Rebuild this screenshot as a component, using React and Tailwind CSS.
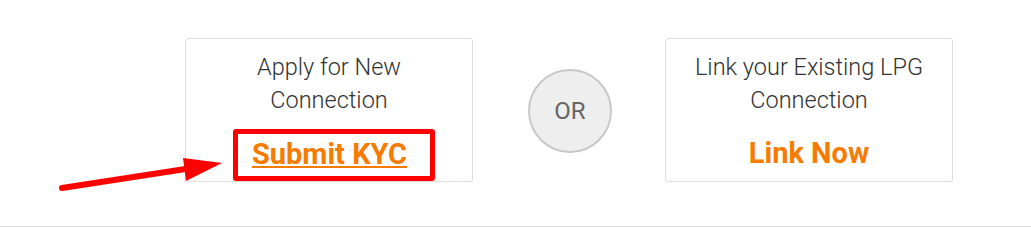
export default function App() {
  return (
    <div className="relative h-[227px] w-full bg-white border-b border-[#dcdcdc] font-['Roboto',sans-serif]">
      <div className="flex items-start pl-[185px] pt-[38px]">
        <div className="w-[288px] h-[144px] border border-[#dddddd] rounded-[3px] flex flex-col items-center pt-[12px]">
          <p className="text-[23.5px] leading-[33px] font-light text-[#333333] text-center">
            Apply for New
            <br />
            Connection
          </p>
          <div className="mt-[12px] ml-[10px] w-[202px] h-[55px] border-[5px] border-[#ff0000] rounded-[3px] flex items-center justify-center">
            <a href="#" className="text-[29px] font-bold text-[#f77b00] underline decoration-2 underline-offset-2 leading-none -mt-[2px] -ml-[9px]">
              Submit KYC
            </a>
          </div>
        </div>

        <div className="ml-[55px] mt-[31px] w-[84px] h-[84px] rounded-full border-2 border-[#c8c8c8] bg-[#eeeeee] flex items-center justify-center">
          <span className="text-[24px] text-[#666666]">OR</span>
        </div>

        <div className="ml-[53px] w-[288px] h-[144px] border border-[#dddddd] rounded-[3px] flex flex-col items-center pt-[12px]">
          <p className="text-[23.5px] leading-[33px] font-light text-[#333333] text-center">
            Link your Existing LPG
            <br />
            Connection
          </p>
          <a href="#" className="mt-[22px] text-[29px] font-bold text-[#f77b00] leading-none">
            Link Now
          </a>
        </div>
      </div>

      <svg className="absolute left-0 top-0 pointer-events-none" width="240" height="200" viewBox="0 0 240 200">
        <line x1="62" y1="188" x2="192" y2="168" stroke="#ff0000" strokeWidth="6" strokeLinecap="round" />
        <polygon points="183,158 222,163 186,181" fill="#ff0000" />
      </svg>
    </div>
  );
}
